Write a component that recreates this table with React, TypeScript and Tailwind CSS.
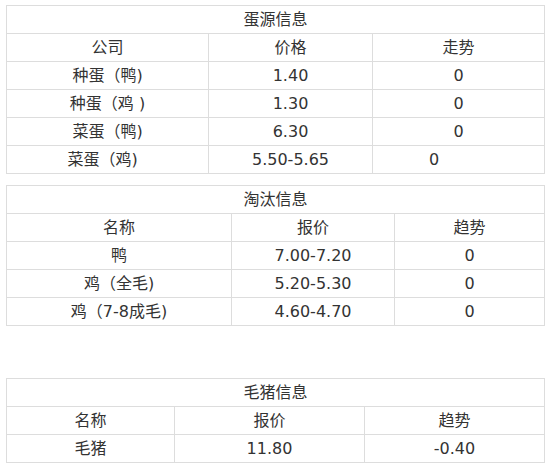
type Row = string[];

const cell = "border border-[#dddddd] h-[28px] p-0 text-center align-middle";

function InfoTable({
  title,
  cols,
  head,
  rows,
  className,
  lastRowOdd,
}: {
  title: string;
  cols: number[];
  head: Row;
  rows: Row[];
  className?: string;
  lastRowOdd?: boolean;
}) {
  return (
    <table className={`w-[539px] table-fixed border-collapse ${className ?? ""}`}>
      <colgroup>
        {cols.map((w, i) => (
          <col key={i} style={{ width: w }} />
        ))}
        <col />
      </colgroup>
      <tbody>
        <tr>
          <td colSpan={3} className={cell}>
            {title}
          </td>
        </tr>
        <tr>
          {head.map((h) => (
            <td key={h} className={cell}>
              {h}
            </td>
          ))}
        </tr>
        {rows.map((r, i) => {
          const odd = lastRowOdd && i === rows.length - 1;
          return (
            <tr key={i}>
              <td className={odd ? `${cell} pr-[10px]` : cell}>{r[0]}</td>
              <td className={cell}>{r[1]}</td>
              <td className={odd ? `${cell} !text-left pl-[56px]` : cell}>{r[2]}</td>
            </tr>
          );
        })}
      </tbody>
    </table>
  );
}

export default function App() {
  return (
    <div
      className="w-[550px] h-[466px] bg-white pl-[6px] pt-[5px] text-[16px] leading-none text-[#333333]"
      style={{ fontFamily: '"DejaVu Sans", "Noto Sans CJK SC", sans-serif' }}
    >
      <InfoTable
        title="蛋源信息"
        cols={[202, 164]}
        head={["公司", "价格", "走势"]}
        rows={[
          ["种蛋（鸭)", "1.40", "0"],
          ["种蛋（鸡 )", "1.30", "0"],
          ["菜蛋（鸭)", "6.30", "0"],
          ["菜蛋（鸡)", "5.50-5.65", "0"],
        ]}
        lastRowOdd
      />
      <InfoTable
        className="mt-[11px]"
        title="淘汰信息"
        cols={[225, 163]}
        head={["名称", "报价", "趋势"]}
        rows={[
          ["鸭", "7.00-7.20", "0"],
          ["鸡（全毛)", "5.20-5.30", "0"],
          ["鸡（7-8成毛)", "4.60-4.70", "0"],
        ]}
      />
      <InfoTable
        className="mt-[52px]"
        title="毛猪信息"
        cols={[168, 190]}
        head={["名称", "报价", "趋势"]}
        rows={[["毛猪", "11.80", "-0.40"]]}
      />
    </div>
  );
}
